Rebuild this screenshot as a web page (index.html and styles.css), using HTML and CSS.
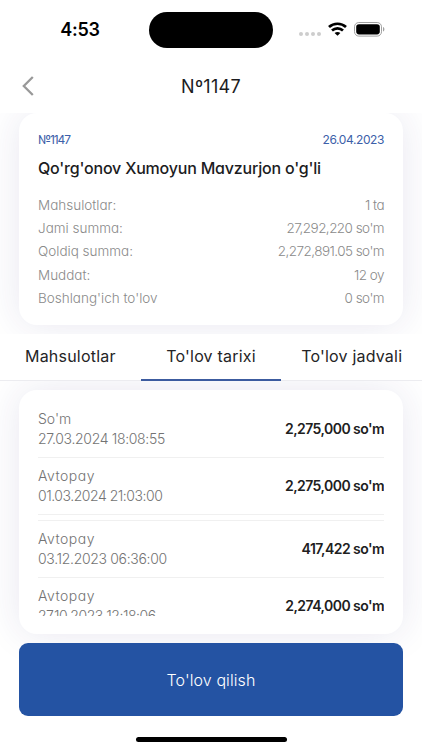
FILE: index.html
```html
<!DOCTYPE html>
<html lang="uz">
<head>
  <meta charset="UTF-8" />
  <meta name="viewport" content="width=device-width, initial-scale=1.0"/>
  <title>№1147</title>
  <link rel="stylesheet" href="styles.css">
</head>
<body>
  <div class="screen">
    <div class="status-bar">
      <div class="clock">4:53</div>
      <div class="island"></div>
      <div class="status-icons">
        <svg class="signal" width="22" height="4" viewBox="0 0 22 4" fill="#cdcdcd">
          <circle cx="2" cy="2" r="2"/><circle cx="8" cy="2" r="2"/><circle cx="14" cy="2" r="2"/><circle cx="20" cy="2" r="2"/>
        </svg>
        <svg class="wifi" width="19" height="14" viewBox="0 0 19 14" fill="none" stroke="#000" stroke-width="2.7">
          <path d="M1 5.1C5.7 .6 13.3 .6 18 5.1"/>
          <path d="M4 8.6C7.1 5.7 11.9 5.7 15 8.6"/>
          <path d="M9.5 13.8L6.6 11.1C8.3 9.6 10.7 9.6 12.4 11.1Z" fill="#000" stroke="none"/>
        </svg>
        <svg class="battery" width="31" height="15" viewBox="0 0 31 15">
          <rect x=".5" y=".5" width="27" height="13.6" rx="4.3" fill="none" stroke="#a0a0a0"/>
          <rect x="2.2" y="2.2" width="23.6" height="10.2" rx="2.8"/>
          <path d="M29 5v4.6c1.9-.7 1.9-3.9 0-4.6z" fill="#a0a0a0"/>
        </svg>
      </div>
    </div>

    <div class="header">
      <svg class="back" width="12" height="20" viewBox="0 0 12 20" fill="none" stroke="#999" stroke-width="2.3">
        <path d="M10.8 1L1.8 10L10.8 19"/>
      </svg>
      <div class="title">Nº1147</div>
    </div>

    <div class="summary">
      <div class="card summary-card">
        <div class="summary-top">
          <span class="number">№1147</span>
          <span class="date">26.04.2023</span>
        </div>
        <div class="name">Qo'rg'onov Xumoyun Mavzurjon o'g'li</div>
        <div class="info-row"><span>Mahsulotlar:</span><span class="value">1 ta</span></div>
        <div class="info-row"><span>Jami summa:</span><span class="value">27,292,220 so'm</span></div>
        <div class="info-row"><span>Qoldiq summa:</span><span class="value">2,272,891.05 so'm</span></div>
        <div class="info-row"><span>Muddat:</span><span class="value">12 oy</span></div>
        <div class="info-row"><span>Boshlang'ich to'lov</span><span class="value">0 so'm</span></div>
      </div>
    </div>

    <div class="tabs">
      <div class="tab">Mahsulotlar</div>
      <div class="tab active">To'lov tarixi</div>
      <div class="tab">To'lov jadvali</div>
    </div>

    <div class="history">
      <div class="card history-card">
        <div class="history-list">
          <div class="payment">
            <div class="payment-info"><div>So'm</div><div class="time">27.03.2024 18:08:55</div></div>
            <div class="amount">2,275,000 so'm</div>
          </div>
          <div class="payment">
            <div class="payment-info"><div class="source">Avtopay</div><div class="time tight">01.03.2024 21:03:00</div></div>
            <div class="amount">2,275,000 so'm</div>
          </div>
          <div class="payment separated">
            <div class="payment-info"><div class="source">Avtopay</div><div class="time">03.12.2023 06:36:00</div></div>
            <div class="amount">417,422 so'm</div>
          </div>
          <div class="payment">
            <div class="payment-info"><div class="source">Avtopay</div><div class="time tight">27.10.2023 12:18:06</div></div>
            <div class="amount">2,274,000 so'm</div>
          </div>
        </div>
      </div>
      <div class="pay-btn">To'lov qilish</div>
      <div class="home-indicator"></div>
    </div>
  </div>
</body>
</html>
```

FILE: styles.css
```css
* {
  box-sizing: border-box;
}

body {
  margin: 0;
  font-family: Inter, "Liberation Sans", sans-serif;
  background-color: #fff;
}

.screen {
  width: 422px;
  height: 750px;
  overflow: hidden;
  display: flex;
  flex-direction: column;
}

.status-bar {
  height: 59px;
  flex: none;
  display: grid;
  grid-template-columns: 149px 124px 149px;
  align-items: center;
}

.clock {
  padding-left: 11px;
  text-align: center;
  font-size: 18px;
  font-weight: 600;
  line-height: 20px;
  letter-spacing: -0.3px;
}

.island {
  height: 36px;
  border-radius: 18px;
  background-color: #000;
}

.status-icons {
  display: flex;
  align-items: center;
  padding-left: 26px;
}

.signal {
  margin-top: 8px;
}

.wifi {
  margin-left: 7px;
  margin-top: -2px;
}

.battery {
  margin-left: 7px;
  margin-top: -1px;
}

.header {
  height: 54px;
  flex: none;
  display: grid;
  grid-template-columns: 22px 1fr 22px;
  align-items: center;
}

.back {
  margin-left: 22px;
}

.title {
  text-align: center;
  font-size: 18px;
  font-weight: 400;
  letter-spacing: 0.3px;
  color: #1c1c1e;
}

.card {
  background-color: #fff;
  border-radius: 18px;
  box-shadow: 0 0 38px rgba(50, 40, 120, 0.11);
}

.summary {
  height: 221px;
  flex: none;
  padding: 0 19px;
  overflow: hidden;
}

.summary-card {
  height: 212px;
  padding: 18px 19px;
  font-feature-settings: "cv11";
}

.summary-top {
  display: flex;
  justify-content: space-between;
  font-size: 12px;
  line-height: 18px;
  color: #3c60a9;
}

.number {
  letter-spacing: -1.1px;
}

.date {
  letter-spacing: -0.4px;
}

.name {
  margin: 7px 0 14px;
  font-size: 16px;
  font-weight: 500;
  line-height: 24px;
  letter-spacing: -0.2px;
  color: #1c1c1e;
  white-space: nowrap;
}

.info-row {
  display: flex;
  justify-content: space-between;
  font-size: 13.5px;
  font-weight: 300;
  line-height: 23.2px;
  color: #8a8a8a;
}

.value {
  letter-spacing: -0.55px;
}

.tabs {
  height: 47px;
  flex: none;
  display: flex;
  border-bottom: 1px solid #ececf0;
}

.tab {
  flex: 1;
  height: 47px;
  line-height: 45px;
  text-align: center;
  font-size: 16px;
  font-weight: 400;
  letter-spacing: 0.2px;
  color: #242426;
}

.tab.active {
  border-bottom: 2px solid #3c5b9f;
}

.history {
  flex: 1;
  padding: 9px 19px 0;
  overflow: hidden;
}

.history-card {
  height: 244px;
  padding: 19px;
  font-feature-settings: "cv11";
}

.history-list {
  height: 207px;
  overflow: hidden;
}

.payment {
  display: flex;
  justify-content: space-between;
  align-items: center;
  height: 57px;
  padding: 8px 0;
  border-bottom: 1px solid #f0f0f0;
}

.payment:first-child {
  height: 49px;
  padding-top: 0;
}

.payment.separated {
  margin-top: 5px;
  height: 58px;
  border-top: 1px solid #f0f0f0;
}

.payment-info {
  font-size: 14px;
  font-weight: 300;
  line-height: 20px;
  color: #737373;
}

.source {
  letter-spacing: 0.5px;
}

.time {
  letter-spacing: -0.33px;
}

.time.tight {
  letter-spacing: -0.47px;
}

.amount {
  padding-bottom: 2px;
  font-size: 14px;
  font-weight: 600;
  letter-spacing: -0.55px;
  color: #202020;
}

.pay-btn {
  position: relative;
  height: 73px;
  margin-top: 9px;
  border-radius: 9px;
  background-color: #2453a3;
  color: #fff;
  text-align: center;
  font-size: 16px;
  font-weight: 300;
  line-height: 74px;
  letter-spacing: 0.1px;
  font-feature-settings: "cv11";
}

.home-indicator {
  width: 151px;
  height: 5px;
  margin: 21px auto 0;
  border-radius: 3px;
  background-color: #000;
}
```
